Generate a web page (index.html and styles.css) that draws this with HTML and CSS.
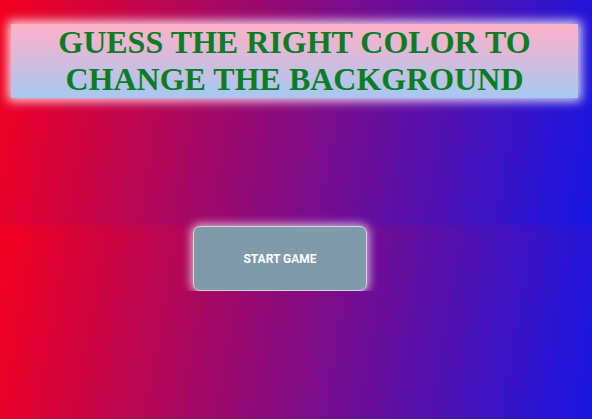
FILE: index.html
```html
<!DOCTYPE html>
<html lang="en">
<head>
<meta charset="utf-8">
<title>Guess the color</title>
<link rel="stylesheet" href="styles.css">
</head>
<body>
<div class="stage">
  <h1 class="title">GUESS THE RIGHT COLOR TO CHANGE THE BACKGROUND</h1>
</div>
<div class="controls">
  <button class="start-btn" type="button">START GAME</button>
</div>
</body>
</html>
```

FILE: styles.css
```css
html {
  background: linear-gradient(100deg, #f4001e 0%, #1616e4 100%) 0 0 / 100% 226px repeat;
}
body {
  margin: 0;
  font-family: "Liberation Serif", serif;
}
.stage {
  height: 226px;
  padding: 24px 14px 0 11px;
  box-sizing: border-box;
}
.title {
  margin: 0;
  font-family: "Liberation Serif", "Times New Roman", serif;
  font-size: 32px;
  font-weight: bold;
  line-height: 37px;
  text-align: center;
  color: #0b7d25;
  background: linear-gradient(to bottom, #ffb0c8, #a6c8f2);
  box-shadow: 0 0 10px 3px rgba(255, 255, 255, 0.85);
}
.controls {
  padding-left: 193px;
}
.start-btn {
  width: 174px;
  height: 65px;
  background: #7f9aab;
  border: 1px solid #d6d6d6;
  border-radius: 7px;
  box-shadow: 0 0 10px 2px rgba(255, 255, 255, 0.7);
  color: #ffffff;
  font-family: Roboto, "Liberation Sans", sans-serif;
  font-weight: bold;
  font-size: 12px;
  cursor: pointer;
}
```
